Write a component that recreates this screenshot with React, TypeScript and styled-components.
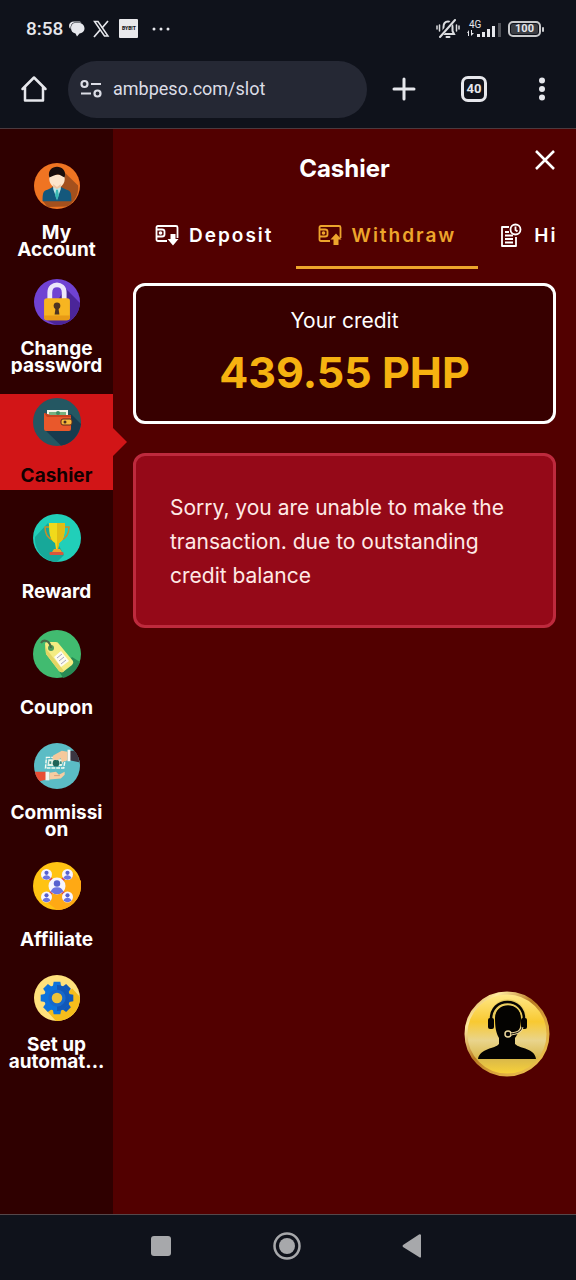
import React from 'react';
import styled, { createGlobalStyle, css } from 'styled-components';

const GlobalStyle = createGlobalStyle`
  * { box-sizing: border-box; }
  body { margin: 0; background: #520000; }
  button, input { font: inherit; }
`;

const sans = 'Inter, "Liberation Sans", Arial, sans-serif';
const system = 'Roboto, "Liberation Sans", sans-serif';

const Screen = styled.div`
  display: flex;
  flex-direction: column;
  min-height: 100vh;
  font-family: ${sans};
  color: #fff;
`;

const BrowserChrome = styled.header`
  background: #0f121b;
  border-bottom: 1px solid #4b3a3f;
  font-family: ${system};
  color: #e6e7ec;
`;

const StatusBar = styled.div`
  display: flex;
  align-items: center;
  justify-content: space-between;
  height: 57px;
  padding: 0 35px 0 26px;
`;

const StatusGroup = styled.div<{ $gap: number }>`
  display: flex;
  align-items: center;
  gap: ${(p) => p.$gap}px;
`;

const Clock = styled.time`
  font-size: 19px;
  font-weight: 500;
  line-height: 24px;
`;

const AppBadge = styled.span`
  width: 19px;
  border-radius: 1px;
  background: #e9e9ec;
  color: #15161a;
  font-size: 5px;
  font-weight: 900;
  line-height: 19px;
  text-align: center;
`;

const Battery = styled.span`
  position: relative;
  width: 33px;
  border: 2px solid #c9cacd;
  border-radius: 5px;
  background: #3c3e44;
  box-shadow: inset 0 0 0 1px #0f121b;
  font-size: 11px;
  font-weight: 700;
  line-height: 12px;
  text-align: center;

  &::after {
    content: '';
    position: absolute;
    top: 4px;
    right: -5px;
    width: 2px;
    height: 5px;
    border-radius: 1px;
    background: #c9cacd;
  }
`;

const AddressBar = styled.div`
  display: flex;
  align-items: center;
  height: 71px;
  padding: 0 13px 7px 20px;
`;

const ToolButton = styled.button`
  display: flex;
  flex: none;
  padding: 0;
  border: 0;
  background: none;
  color: inherit;
  cursor: pointer;
`;

const UrlField = styled.label`
  display: flex;
  flex: 1;
  align-items: center;
  gap: 11px;
  min-width: 0;
  height: 57px;
  margin: 0 24px 0 20px;
  padding: 0 12px;
  border-radius: 29px;
  background: #252834;
`;

const UrlInput = styled.input`
  flex: 1;
  min-width: 0;
  padding: 0;
  border: 0;
  outline: 0;
  background: none;
  color: #dcdde6;
  font-size: 18px;
  line-height: 26px;
`;

const Tools = styled.div`
  display: flex;
  align-items: center;
  gap: 44px;
`;

const TabCount = styled.span`
  width: 26px;
  border: 3px solid #e6e7ec;
  border-radius: 7px;
  font-size: 13px;
  font-weight: 700;
  line-height: 20px;
  text-align: center;
`;

const Body = styled.div`
  display: flex;
  flex: 1;
`;

const Sidebar = styled.nav`
  display: flex;
  flex: none;
  flex-direction: column;
  gap: 20px;
  width: 113px;
  padding: 33px 0;
  background: #2f0000;
`;

const SideLink = styled.a<{ $twoLine?: boolean; $active?: boolean }>`
  position: relative;
  display: flex;
  flex-direction: column;
  align-items: center;
  gap: ${(p) => (p.$twoLine ? 15 : 21)}px;
  height: 96px;
  padding: ${(p) => (p.$twoLine ? 1 : 4)}px 8px 0;
  color: #fff;
  text-decoration: none;

  ${(p) =>
    p.$active &&
    css`
      background: #d21517;
      color: #120000;

      &::after {
        content: '';
        position: absolute;
        top: 34px;
        left: 100%;
        border: 14px solid transparent;
        border-left-color: #d21517;
        border-right: 0;
      }
    `}
`;

const SideLabel = styled.span<{ $clip?: boolean }>`
  flex: none;
  max-width: 100%;
  overflow: ${(p) => (p.$clip ? 'hidden' : 'visible')};
  font-size: 19px;
  font-weight: 700;
  line-height: 17px;
  text-align: center;
  overflow-wrap: anywhere;
`;

const Content = styled.main`
  flex: 1;
  min-width: 0;
  padding: 0 20px;
`;

const TitleRow = styled.div`
  position: relative;
  padding-top: 24px;
`;

const Title = styled.h1`
  margin: 0;
  font-size: 24px;
  line-height: 32px;
  text-align: center;
`;

const CloseButton = styled(ToolButton)`
  position: absolute;
  top: 20px;
  right: 0;
`;

const Tabs = styled.div`
  display: flex;
  height: 84px;
  margin-right: -2px;
  overflow: hidden;
`;

const Tab = styled.button<{ $active?: boolean }>`
  display: flex;
  flex: none;
  align-items: center;
  gap: 10px;
  padding: 29px 22px 10px;
  border: 0;
  border-bottom: 3px solid ${(p) => (p.$active ? '#eda52c' : 'transparent')};
  background: none;
  color: ${(p) => (p.$active ? '#eda52c' : '#fff')};
  font-size: 19px;
  font-weight: 600;
  letter-spacing: 2px;
  cursor: pointer;
`;

const CreditCard = styled.section`
  margin-top: 14px;
  padding: 18px 20px 17px;
  border: 3px solid #fff;
  border-radius: 12px;
  background: #370000;
  text-align: center;
`;

const CreditLabel = styled.p`
  margin: 0;
  font-size: 21px;
  line-height: 34px;
`;

const CreditAmount = styled.p`
  margin: 2px 0 0;
  color: #f6b210;
  font-size: 43px;
  font-weight: 700;
  line-height: 64px;
`;

const Notice = styled.p`
  margin: 29px 0 0;
  padding: 35px 34px 32px;
  border: 3px solid #be2a3d;
  border-radius: 12px;
  background: #950918;
  color: #ffe9e6;
  font-size: 21px;
  line-height: 34px;
`;

const SupportButton = styled(ToolButton)`
  position: fixed;
  right: 26px;
  bottom: 203px;
`;

const SystemNav = styled.footer`
  display: flex;
  align-items: center;
  justify-content: center;
  gap: 98px;
  height: 66px;
  padding: 0 3px 3px 0;
  border-top: 1px solid #55474a;
  background: #0f121b;
  color: #a7a8ab;
`;

const Disc = ({ children }: { children: React.ReactNode }) => (
  <svg width="48" height="48" viewBox="0 0 48 48" fill="none" aria-hidden="true">
    {children}
  </svg>
);

const AccountIcon = () => (
  <Disc>
    <circle cx="24" cy="24" r="24" fill="#ef7422" />
    <path d="M30 8 46 23.500C47 34 41 42 34 45.500L14 46 9 39.500Z" fill="#a4501d" />
    <path d="M9 40C9 33 9 29 14 28L20 25H28L34 28C39 29 39 33 39 40Z" fill="#14587c" />
    <path d="M20 23H28V27L24 38 20 27Z" fill="#bfe7e6" />
    <path d="M23 28H25L26 34 24 39 22 34Z" fill="#39b8b4" />
    <path d="M16 12H32V17C32 22 28 26 24 26S16 22 16 17Z" fill="#fde5cb" />
    <path d="M20 22V25L24 27 28 25V22L24 25Z" fill="#eec6a3" />
    <path d="M16 15C14 8 19 4 24 4S34 8 32 15C29 14 27 12 25 12S19 14 16 15Z" fill="#180d0c" />
  </Disc>
);

const LockIcon = () => (
  <Disc>
    <circle cx="24" cy="24" r="24" fill="#7042d3" />
    <path d="M33 10 48 25C47 39 36 48 23 48L11 42Z" fill="#4b2599" />
    <path d="M16.500 22V14C16.500 3.500 31.500 3.500 31.500 14V22" stroke="#ece6fa" strokeWidth="5" />
    <rect x="10.500" y="20" width="27" height="23" rx="3" fill="#f7b521" />
    <path d="M10.500 38H37.500V40Q37.500 43 34 43H14Q10.500 43 10.500 40Z" fill="#e89a16" />
    <circle cx="24" cy="28" r="3.500" fill="#4d3422" />
    <path d="M22.500 30H25.500L26.500 37H21.500Z" fill="#4d3422" />
  </Disc>
);

const WalletIcon = () => (
  <Disc>
    <circle cx="24" cy="24" r="24" fill="#245762" />
    <path d="M38 16 48 26C46 38 38 46 28 47.500L12 32Z" fill="#173b4e" />
    <path d="M14 12H35V20H14Z" fill="#f2f4e6" />
    <path d="M16 14H33V20H16Z" fill="#76b381" />
    <circle cx="25" cy="15" r="2" fill="#3d8c62" />
    <path d="M11 15 17 17H36Q38 17 38 19V31Q38 33 36 33H13Q11 33 11 31Z" fill="#e9582b" />
    <path d="M11 15 17 17H38V19H14Z" fill="#c8431f" />
    <rect x="28" y="21" width="11" height="6" rx="2" fill="#f6b83b" stroke="#5a2b1d" />
    <circle cx="32" cy="24" r="1.500" fill="#4a2a20" />
  </Disc>
);

const TrophyIcon = () => (
  <Disc>
    <circle cx="24" cy="24" r="24" fill="#21cfb9" />
    <path d="M15 9 2 23C1 38 13 48 24 48L31 41 24 28Z" fill="#17a899" />
    <path d="M16 13H12C12 20 14 24 20 26M32 13H36C36 20 34 24 28 26" stroke="#c98d28" strokeWidth="1.500" />
    <path d="M16 9H32C32 20 31 26 26 29L25 35H23L22 29C17 26 16 20 16 9Z" fill="#f1d91b" />
    <path d="M24 9H32C32 20 31 26 26 29L25 35H24Z" fill="#e2bd13" />
    <path d="M21 35H27L29 38H19Z" fill="#f0a22b" />
    <rect x="16.500" y="38" width="14" height="3" rx="1" fill="#d9573d" />
  </Disc>
);

const CouponIcon = () => (
  <Disc>
    <circle cx="24" cy="24" r="24" fill="#41bb70" />
    <path d="M39 27 47 32C43 42 37 46 30 48L26 41Z" fill="#278a55" />
    <path d="M12 14Q12 12 14 12L23 12Q25 12 26 14L40 31Q41 33 39 35L30 42Q28 43 26 41L13 24Z" fill="#f4ec82" />
    <path d="M12 14 13 24 26 41Q28 43 30 42L31 41 14 20Z" fill="#e3d564" />
    <circle cx="18" cy="18" r="3" fill="#4b9a59" />
    <path d="M18 18C17 10 10 9 8 13" stroke="#476b48" strokeWidth="2" />
    <path d="M21 27 28 21 36 31 28 37Z" fill="#fcfbef" />
    <path d="M24 28 29 24M26 31 31 27M28 34 33 30" stroke="#a6a6bd" />
  </Disc>
);

const CommissionIcon = () => (
  <Disc>
    <circle cx="24" cy="24" r="24" fill="#5bbcc5" />
    <path d="M37 8H42Q47 13 47 20L37 18Z" fill="#3b3541" />
    <path d="M35 7H38V19H35Z" fill="#f5f7f5" />
    <path d="M13 15H33L31 26H12Z" stroke="#f5faf0" strokeWidth="1.500" strokeDasharray="4 1" />
    <path d="M15 17H31L29 24H14Z" fill="#e5f3e8" />
    <circle cx="23" cy="21" r="3.500" fill="#1f6358" />
    <path d="M16 19H18V22H16ZM27 19H29V22H27Z" fill="#418d83" />
    <path d="M35 9 29 8 20 13 19 17 24 18 28 16 29 20 35 18Z" fill="#f5c99c" />
    <path d="M1 30H13V38L6 40Q2 36 1 30Z" fill="#e84d34" />
    <path d="M12 30H16V39H12Z" fill="#f3f5ef" />
    <path d="M16 31 23 30 26 33 32 30V33L28 37 16 38Z" fill="#f7cda2" />
    <path d="M21 34H27" stroke="#d79e79" />
  </Disc>
);

const Person = ({ x, y, r }: { x: number; y: number; r: number }) => (
  <g>
    <circle cx={x} cy={y} r={r} fill="#f6f5ff" />
    <circle cx={x} cy={y - r * 0.3} r={r * 0.38} fill="#5661cf" />
    <path
      d={`M${x - r * 0.75} ${y + r * 0.65}Q${x - r * 0.5} ${y + r * 0.1} ${x} ${y + r * 0.15}Q${x + r * 0.5} ${y + r * 0.1} ${x + r * 0.75} ${y + r * 0.65}Q${x} ${y + r * 1.3} ${x - r * 0.75} ${y + r * 0.65}Z`}
      fill="#6b74df"
    />
  </g>
);

const AffiliateIcon = () => (
  <Disc>
    <circle cx="24" cy="24" r="24" fill="#ffc313" />
    <path d="M38 8 48 19V26C46 40 35 48 24 48L10 37Z" fill="#ffa914" />
    <path d="M14 13 34 35M34 13 14 35" stroke="#d94245" strokeWidth="3" />
    <Person x={13.5} y={12.5} r={5.5} />
    <Person x={34.5} y={12.5} r={5.5} />
    <Person x={13.5} y={35} r={5.5} />
    <Person x={34.5} y={35} r={5.5} />
    <Person x={24} y={24} r={8.5} />
  </Disc>
);

const teeth = [0, 45, 90, 135, 180, 225, 270, 315];

const GearIcon = () => (
  <Disc>
    <circle cx="24" cy="24" r="24" fill="#ffe17c" />
    <path d="M40 14 48 23C48 39 36 48 23 48L12 36Z" fill="#f6bd1b" />
    {teeth.map((a) => (
      <path key={a} d="M19.500 13 20.500 7H27.500L28.500 13Z" fill={a > 0 && a < 180 ? '#1158b8' : '#0d73dc'} transform={`rotate(${a} 24 24)`} />
    ))}
    <circle cx="24" cy="24" r="13.500" fill="#0d73dc" />
    <path d="M24 10.500A13.500 13.500 0 0 1 24 37.500Z" fill="#1158b8" />
    <circle cx="24" cy="24" r="9" fill="#1768cb" />
    <circle cx="24" cy="24" r="5.500" fill="#eec237" />
  </Disc>
);

const MoneyIcon = ({ up }: { up?: boolean }) => (
  <svg width="24" height="22" viewBox="0 0 24 22" fill="none" stroke="currentColor" strokeWidth="1.800" strokeLinejoin="round" aria-hidden="true">
    <path d="M12 17H3Q1.500 17 1.500 15.500V3.500Q1.500 2 3 2H21Q22.500 2 22.500 3.500V14" />
    <path d="M2 5.500H7Q9.500 5.500 9.500 7.500V10.500Q9.500 12.500 7 12.500H2" />
    <circle cx="5.500" cy="9" r="1.800" fill="currentColor" stroke="none" />
    {up ? (
      <path d="M18 9.500 23.500 15.500H20.500V21H15.500V15.500H12.500Z" fill="currentColor" stroke="none" />
    ) : (
      <path d="M15.500 10H20.500V15H23.500L18 21.500 12.500 15H15.500Z" fill="currentColor" stroke="none" />
    )}
  </svg>
);

const HistoryIcon = () => (
  <svg width="24" height="24" viewBox="0 0 24 24" fill="none" stroke="currentColor" strokeWidth="1.800" aria-hidden="true">
    <path d="M9 4H2V23H16V14" strokeLinejoin="round" />
    <path d="M5 9H9M5 12.500H13M5 16H13M5 19.500H13" />
    <circle cx="15.500" cy="6.500" r="5" />
    <path d="M15.500 3.500V7L17.500 8.500" />
  </svg>
);

const sideItems = [
  { label: 'My Account', icon: <AccountIcon />, twoLine: true },
  { label: 'Change password', icon: <LockIcon />, twoLine: true, clip: true },
  { label: 'Cashier', icon: <WalletIcon />, active: true },
  { label: 'Reward', icon: <TrophyIcon /> },
  { label: 'Coupon', icon: <CouponIcon />, clip: true },
  { label: 'Commission', icon: <CommissionIcon />, twoLine: true },
  { label: 'Affiliate', icon: <AffiliateIcon /> },
  { label: 'Set up automat...', icon: <GearIcon />, twoLine: true },
];

export default function App() {
  return (
    <Screen>
      <GlobalStyle />
      <BrowserChrome>
        <StatusBar>
          <StatusGroup $gap={6}>
            <Clock>8:58</Clock>
            <svg width="16" height="16" viewBox="0 0 16 16" aria-hidden="true">
              <path d="M6 2H10C13.500 2 15.500 4.500 15.500 7.500S13 12 10.500 12.500L8 15.500 6.500 12.500C3.500 12 2 10 2 7S3.500 2 6 2Z" fill="#e6e7ec" />
              <path d="M0 5C0 2 2 .5 5 .5H9.500C11 .5 12 1 12.500 1.500H6C3 1.500 1.500 4 1.500 8Q0 7 0 5Z" fill="#e6e7ec" />
            </svg>
            <StatusGroup $gap={8}>
              <svg width="20" height="18" viewBox="0 0 20 18" fill="none" stroke="#e6e7ec" aria-hidden="true">
                <path d="M3.500 1.500H7L17 16H13.500Z" strokeWidth="1.500" />
                <path d="M17 1 11 8M9 10 3 17" strokeWidth="1.700" />
              </svg>
              <AppBadge>BYB!T</AppBadge>
              <svg width="32" height="18" viewBox="0 0 32 18" fill="#e6e7ec" aria-hidden="true">
                <circle cx="8" cy="9" r="1.500" />
                <circle cx="15" cy="9" r="1.500" />
                <circle cx="22" cy="9" r="1.500" />
              </svg>
            </StatusGroup>
          </StatusGroup>
          <StatusGroup $gap={7}>
            <svg width="24" height="20" viewBox="0 0 24 20" fill="none" stroke="#dcdde0" strokeWidth="2" strokeLinecap="round" aria-hidden="true">
              <path d="M6 15H18L16.500 12V8C16.500 4 14.500 2.500 12 2.500S7.500 4 7.500 8V12L6 15ZM10.500 18H13.500" />
              <path d="M3 18 18 1" stroke="#0f121b" strokeWidth="4" />
              <path d="M4 18 19 1" />
              <path d="M1 7V10M3.500 6V12M20.500 6V12M23 7V10" strokeWidth="1.500" />
            </svg>
            <svg width="34" height="20" viewBox="0 0 34 20" fill="#e6e7ec" aria-hidden="true">
              <text x="2" y="9" fontSize="10" fontFamily="Roboto, sans-serif">4G</text>
              <path d="M0 14 2 11V17H1V14ZM4 11H5V14H7L4 17Z" />
              <path d="M10 15H13V18H10ZM15 13H18V18H15ZM20 10H23V18H20ZM25 7H28V18H25Z" />
              <path d="M31 4H34V18H31Z" fill="#505259" />
            </svg>
            <Battery>100</Battery>
          </StatusGroup>
        </StatusBar>
        <AddressBar>
          <ToolButton aria-label="Home">
            <svg width="28" height="28" viewBox="0 0 28 28" fill="none" stroke="currentColor" strokeWidth="2.500" strokeLinejoin="round" strokeLinecap="round">
              <path d="M2.500 14 14 2.500 25.500 14M5 12V25.500H23V12" />
            </svg>
          </ToolButton>
          <UrlField>
            <svg width="22" height="20" viewBox="0 0 22 20" fill="none" stroke="#dcdde6" strokeWidth="2.200" aria-hidden="true">
              <circle cx="4.500" cy="5" r="3" />
              <circle cx="17.500" cy="14.500" r="3" />
              <path d="M11 5H21M1 14.500H11" />
            </svg>
            <UrlInput aria-label="Address" defaultValue="ambpeso.com/slot" />
          </UrlField>
          <Tools>
            <ToolButton aria-label="New tab">
              <svg width="26" height="24" viewBox="0 0 26 24" stroke="currentColor" strokeWidth="3" strokeLinecap="round">
                <path d="M13 2V22M3 12H23" />
              </svg>
            </ToolButton>
            <ToolButton aria-label="Tabs">
              <TabCount>40</TabCount>
            </ToolButton>
            <ToolButton aria-label="Menu">
              <svg width="32" height="24" viewBox="0 0 32 24" fill="currentColor">
                <circle cx="11" cy="3.500" r="3" />
                <circle cx="11" cy="12" r="3" />
                <circle cx="11" cy="20.500" r="3" />
              </svg>
            </ToolButton>
          </Tools>
        </AddressBar>
      </BrowserChrome>

      <Body>
        <Sidebar>
          {sideItems.map((item) => (
            <SideLink key={item.label} href="#" $twoLine={item.twoLine} $active={item.active}>
              {item.icon}
              <SideLabel $clip={item.clip}>{item.label}</SideLabel>
            </SideLink>
          ))}
        </Sidebar>
        <Content>
          <TitleRow>
            <Title>Cashier</Title>
            <CloseButton aria-label="Close">
              <svg width="22" height="22" viewBox="0 0 22 22" stroke="currentColor" strokeWidth="2.500">
                <path d="M2 2 20 20M20 2 2 20" />
              </svg>
            </CloseButton>
          </TitleRow>
          <Tabs>
            <Tab><MoneyIcon />Deposit</Tab>
            <Tab $active><MoneyIcon up />Withdraw</Tab>
            <Tab><HistoryIcon />History</Tab>
          </Tabs>
          <CreditCard>
            <CreditLabel>Your credit</CreditLabel>
            <CreditAmount>439.55 PHP</CreditAmount>
          </CreditCard>
          <Notice>
            Sorry, you are unable to make the transaction. due to outstanding credit balance
          </Notice>
        </Content>
      </Body>

      <SupportButton aria-label="Customer support">
        <svg width="86" height="86" viewBox="0 0 86 86" fill="none">
          <defs>
            <linearGradient id="goldFace" x1="0" y1="0" x2="0" y2="1">
              <stop offset="0" stopColor="#ffe98c" />
              <stop offset=".35" stopColor="#f8c931" />
              <stop offset=".58" stopColor="#e9d48c" />
              <stop offset=".8" stopColor="#d9b84a" />
              <stop offset="1" stopColor="#fbd437" />
            </linearGradient>
            <linearGradient id="goldRim" x1="0" y1="0" x2="1" y2="1">
              <stop offset="0" stopColor="#c98f2c" />
              <stop offset=".2" stopColor="#ffeaa0" />
              <stop offset=".45" stopColor="#b87820" />
              <stop offset=".65" stopColor="#d9a43c" />
              <stop offset="1" stopColor="#f4cc55" />
            </linearGradient>
          </defs>
          <circle cx="43" cy="43" r="41" fill="url(#goldFace)" stroke="url(#goldRim)" strokeWidth="3" />
          <path d="M31 27C31 10 57 10 57 27C57 37 54 43 51 47V53C56 58 71 57 72 68H14C16 57 31 58 35 53V47C32 42 31 36 31 27Z" fill="#040301" />
          <path d="M28 29C27 5 60 5 60 29" stroke="#e6c95d" strokeWidth="5" />
          <path d="M27 29C26 5 61 5 60 29" stroke="#040301" strokeWidth="2.500" />
          <rect x="24" y="27" width="6" height="11" rx="2" fill="#040301" />
          <rect x="57" y="27" width="6" height="11" rx="2" fill="#040301" />
          <path d="M58 36C57 41 53 42 47 43" stroke="#ead59a" strokeWidth="3" />
          <circle cx="44" cy="43" r="3" fill="#040301" stroke="#ead59a" strokeWidth="1.500" />
          <path d="M58 36C57 41 53 42 47 43" stroke="#040301" />
        </svg>
      </SupportButton>

      <SystemNav>
        <ToolButton aria-label="Recent apps">
          <svg width="28" height="28" viewBox="0 0 28 28" fill="currentColor"><rect x="4" y="4" width="20" height="20" rx="3" /></svg>
        </ToolButton>
        <ToolButton aria-label="System home">
          <svg width="28" height="28" viewBox="0 0 28 28" fill="none" stroke="currentColor">
            <circle cx="14" cy="14" r="12.500" strokeWidth="2.500" />
            <circle cx="14" cy="14" r="8" fill="currentColor" stroke="none" />
          </svg>
        </ToolButton>
        <ToolButton aria-label="Back">
          <svg width="28" height="28" viewBox="0 0 28 28" fill="currentColor"><path d="M22 3V25Q21.500 26 20 25L4 15Q3 14 4 13L20 2.500Q21.500 2 22 3Z" /></svg>
        </ToolButton>
      </SystemNav>
    </Screen>
  );
}
